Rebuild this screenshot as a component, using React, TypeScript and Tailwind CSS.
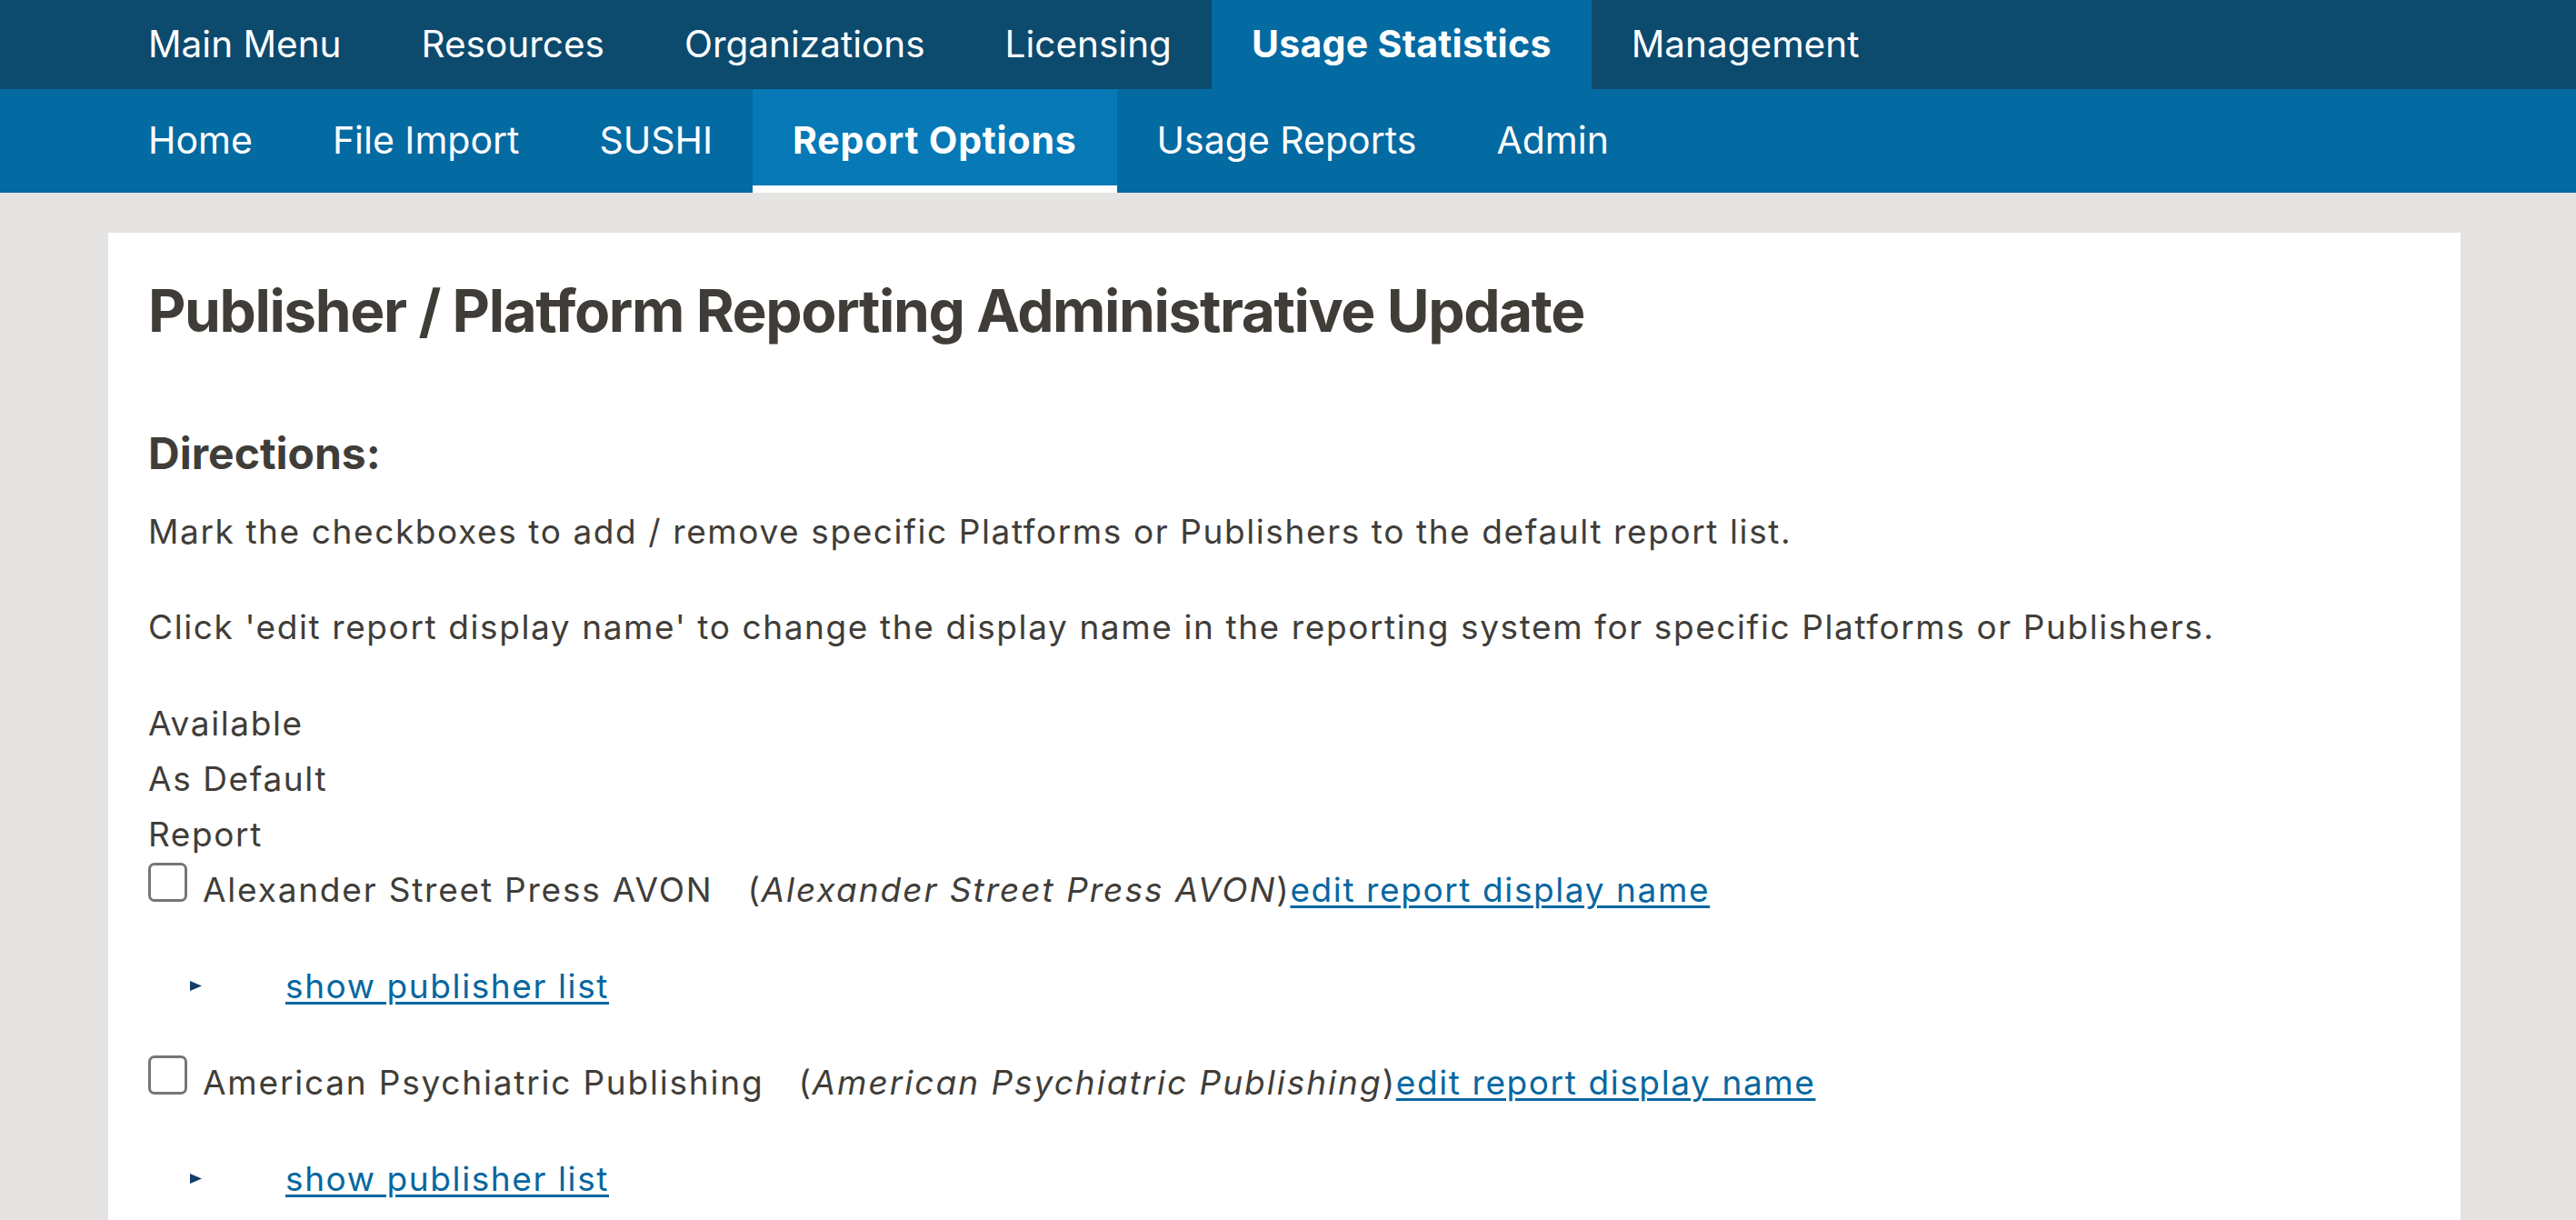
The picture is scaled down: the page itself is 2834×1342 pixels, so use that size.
import React from "react";

const mainMenu = [
  "Main Menu",
  "Resources",
  "Organizations",
  "Licensing",
  "Usage Statistics",
  "Management",
];

const subMenu = [
  "Home",
  "File Import",
  "SUSHI",
  "Report Options",
  "Usage Reports",
  "Admin",
];

const platforms = [
  { name: "Alexander Street Press AVON", display: "Alexander Street Press AVON" },
  {
    name: "American Psychiatric Publishing",
    display: "American Psychiatric Publishing",
  },
];

const TopNav = () => {
  return (
    <nav className="h-[98px] bg-[#0c4a6e] flex pl-[119px]">
      {mainMenu.map((item) => (
        <a
          key={item}
          href="#"
          className={
            item === "Usage Statistics"
              ? "flex items-center px-[44px] h-full text-white text-[41px] tracking-[0.3px] font-bold bg-[#036aa2]"
              : "flex items-center px-[44px] h-full text-white text-[40.5px]"
          }
        >
          {item}
        </a>
      ))}
    </nav>
  );
};

const SubNav = () => {
  return (
    <nav className="h-[114px] bg-[#036aa2] flex pl-[119px]">
      {subMenu.map((item) => (
        <a
          key={item}
          href="#"
          className={
            item === "Report Options"
              ? "flex items-center px-[44px] h-full text-white text-[41px] tracking-[0.8px] font-bold bg-[#0679b6] border-b-[8px] border-white pt-[8px]"
              : "flex items-center px-[44px] h-full text-white text-[41px]"
          }
        >
          {item}
        </a>
      ))}
    </nav>
  );
};

const Triangle = () => (
  <svg width="15" height="13" viewBox="0 0 15 13" className="inline-block">
    <path d="M1 1 L14 6.5 L1 12 Z" fill="#123c6a" />
  </svg>
);

const PlatformRow = ({ name, display }: { name: string; display: string }) => {
  return (
    <>
      <div className="leading-[61px] whitespace-nowrap">
        <span className="inline-block align-baseline w-[43px] h-[43px] border-[3px] border-[#767676] rounded-[7px] bg-white mr-[17px]" />
        <span className="tracking-[1.8px]">{name}</span>
        <span className="inline-block w-[38px]" />
        (<i className="tracking-[2px]">{display}</i>)
        <a
          href="#"
          className="text-[#0767a0] underline decoration-[3px] underline-offset-[4px]"
        >
          edit report display name
        </a>
      </div>
      <div className="leading-[61px] flex items-center pl-[45px]">
        <Triangle />
        <a
          href="#"
          className="ml-[91px] text-[#0767a0] underline decoration-[3px] underline-offset-[4px]"
        >
          show publisher list
        </a>
      </div>
    </>
  );
};

export default function App() {
  return (
    <div
      className="min-h-screen bg-[#e5e4e2] text-[#403d39]"
      style={{ fontFamily: "Inter, 'Noto Sans', sans-serif" }}
    >
      <TopNav />
      <SubNav />

      <div className="pt-[44px] pl-[119px] pr-[127px]">
        <div className="bg-white px-[44px] pt-[46px] pb-[40px] min-h-[1100px]">
          <h1 className="text-[64px] leading-[80px] tracking-[-1.4px] font-bold text-[#403c38]">
            Publisher / Platform Reporting Administrative Update
          </h1>

          <h3 className="mt-[87px] text-[48px] leading-[60px] font-bold">
            Directions:
          </h3>

          <div className="text-[37px] tracking-[1.6px]">
            <p className="mt-[26px] leading-[60px]">
              Mark the checkboxes to add / remove specific Platforms or
              Publishers to the default report list.
            </p>
            <p className="mt-[45px] leading-[60px]">
              Click 'edit report display name' to change the display name in
              the reporting system for specific Platforms or Publishers.
            </p>

            <div className="mt-[45px] leading-[61px]">
              <div>Available</div>
              <div>As Default</div>
              <div>Report</div>
            </div>

            <div className="flex flex-col gap-[45px]">
              {platforms.map((p) => (
                <PlatformRow key={p.name} name={p.name} display={p.display} />
              ))}
            </div>
          </div>
        </div>
      </div>
    </div>
  );
}
